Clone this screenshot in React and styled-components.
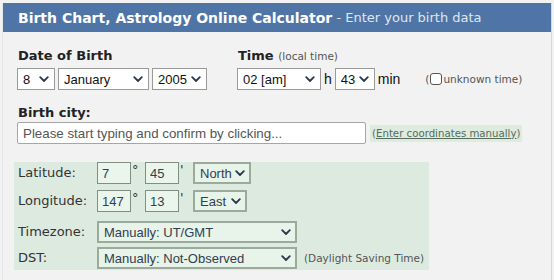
import styled, { createGlobalStyle } from 'styled-components';

const GlobalStyle = createGlobalStyle`
    html, body {
        margin: 0;
        padding: 0;
        background: #f2f2f2;
    }
    body {
        font-family: "DejaVu Sans", Verdana, sans-serif;
    }
`;

function Chevron() {
    return (
        <ArrowIcon width="10" height="7" viewBox="0 0 10 7">
            <path d="M1.2 1.2 L5 5 L8.8 1.2" fill="none" stroke="currentColor" strokeWidth="1.8" strokeLinecap="round" strokeLinejoin="round" />
        </ArrowIcon>
    );
}

function Dropdown({ width, value, options, green }) {
    return (
        <SelectWrap $width={width}>
            <Select $green={green} defaultValue={value}>
                {options.map((o) => (
                    <option key={o}>{o}</option>
                ))}
            </Select>
            <Chevron />
        </SelectWrap>
    );
}

const months = ['January', 'February', 'March', 'April', 'May', 'June', 'July', 'August', 'September', 'October', 'November', 'December'];

export default function App() {
    return (
        <>
            <GlobalStyle />
            <Panel>
                <Header>
                    Birth Chart, Astrology Online Calculator
                    <HeaderSub>&nbsp;- Enter your birth data</HeaderSub>
                </Header>
                <Body>
                    <TopRow>
                        <Group>
                            <Label>Date of Birth</Label>
                            <Controls>
                                <Dropdown width={38} value="8" options={['8']} />
                                <Dropdown width={91} value="January" options={months} />
                                <Dropdown width={55} value="2005" options={['2005']} />
                            </Controls>
                        </Group>
                        <Group>
                            <Label>
                                Time <Note>(local time)</Note>
                            </Label>
                            <Controls>
                                <Dropdown width={84} value="02 [am]" options={['02 [am]']} />
                                <Unit>h</Unit>
                                <Dropdown width={40} value="43" options={['43']} />
                                <Unit>min</Unit>
                                <Unknown>
                                    (<CheckBox type="checkbox" />unknown time)
                                </Unknown>
                            </Controls>
                        </Group>
                    </TopRow>
                    <CityLabel>Birth city:</CityLabel>
                    <CityRow>
                        <CityInput placeholder="Please start typing and confirm by clicking..." />
                        <ManualLink>
                            (<u>Enter coordinates manually</u>)
                        </ManualLink>
                    </CityRow>
                    <CoordBox>
                        <CoordRow $top={3}>
                            <RowLabel>Latitude:</RowLabel>
                            <Fields>
                                <NumInput defaultValue="7" />
                                <Mark>°</Mark>
                                <NumInput defaultValue="45" />
                                <Mark>'</Mark>
                                <Dropdown width={58} value="North" options={['North', 'South']} green />
                            </Fields>
                        </CoordRow>
                        <CoordRow $top={6}>
                            <RowLabel>Longitude:</RowLabel>
                            <Fields>
                                <NumInput defaultValue="147" />
                                <Mark>°</Mark>
                                <NumInput defaultValue="13" />
                                <Mark>'</Mark>
                                <Dropdown width={54} value="East" options={['East', 'West']} green />
                            </Fields>
                        </CoordRow>
                        <CoordRow $top={9}>
                            <RowLabel>Timezone:</RowLabel>
                            <Fields>
                                <Dropdown width={200} value="Manually: UT/GMT" options={['Manually: UT/GMT']} green />
                            </Fields>
                        </CoordRow>
                        <CoordRow $top={4}>
                            <RowLabel>DST:</RowLabel>
                            <Fields>
                                <Dropdown width={200} value="Manually: Not-Observed" options={['Manually: Not-Observed']} green />
                                <DstNote>(Daylight Saving Time)</DstNote>
                            </Fields>
                        </CoordRow>
                    </CoordBox>
                </Body>
            </Panel>
        </>
    );
}

const Panel = styled.div`
    margin: 3px 0 0 2px;
    width: 548px;
    height: 277px;
    background: #f2f2f2;
    border-left: 1px solid #e6e6e6;
    border-right: 1px solid #d8d8d8;
    overflow: hidden;
`;

const Header = styled.div`
    height: 29px;
    display: flex;
    align-items: center;
    padding-left: 15px;
    background: #4f75a7;
    color: #ffffff;
    font-size: 14px;
    font-weight: bold;
    white-space: nowrap;
`;

const HeaderSub = styled.span`
    font-size: 13px;
    font-weight: normal;
    color: #dfe7f2;
`;

const Body = styled.div`
    padding: 15px 0 0 14px;
`;

const TopRow = styled.div`
    display: flex;
    gap: 30px;
`;

const Group = styled.div`
    display: flex;
    flex-direction: column;
    gap: 3px;
`;

const Label = styled.div`
    font-size: 13px;
    font-weight: bold;
    color: #222;
    line-height: 18px;
    padding-left: 1px;
`;

const Note = styled.span`
    font-size: 10.5px;
    font-weight: normal;
    color: #555;
`;

const Controls = styled.div`
    display: flex;
    align-items: center;
    gap: 3px;
`;

const SelectWrap = styled.div`
    position: relative;
    width: ${(p) => p.$width}px;
    height: 22px;
`;

const Select = styled.select`
    appearance: none;
    width: 100%;
    height: 100%;
    margin: 0;
    padding: 0 0 0 5px;
    font-family: "Liberation Sans", Arial, sans-serif;
    font-size: 13px;
    color: ${(p) => (p.$green ? '#2f4050' : '#111')};
    background: ${(p) => (p.$green ? '#e8f3ea' : '#ffffff')};
    border: ${(p) => (p.$green ? '2px solid #9aab9c' : '1px solid #9a9a9a')};
    border-radius: 0;
    outline: none;
`;

const ArrowIcon = styled.svg`
    position: absolute;
    right: 6px;
    top: 8px;
    color: #2a3a4a;
    pointer-events: none;
`;

const Unit = styled.span`
    font-family: "Liberation Sans", Arial, sans-serif;
    font-size: 14px;
    color: #111;
`;

const Unknown = styled.span`
    margin-left: 22px;
    display: flex;
    align-items: center;
    font-size: 10.5px;
    color: #555;
`;

const CheckBox = styled.input`
    appearance: none;
    width: 12px;
    height: 12px;
    margin: 0 1px;
    border: 1px solid #555;
    border-radius: 3px;
    background: #fff;
`;

const CityLabel = styled(Label)`
    margin-top: 14px;
`;

const CityRow = styled.div`
    display: flex;
    align-items: center;
    gap: 4px;
`;

const CityInput = styled.input`
    box-sizing: border-box;
    width: 349px;
    height: 22px;
    margin: 0;
    padding: 0 5px;
    font-family: "Liberation Sans", Arial, sans-serif;
    font-size: 13.333px;
    background: #fff;
    border: 1px solid #a6a6a6;
    border-radius: 2px;
    &::placeholder {
        color: #555;
    }
`;

const ManualLink = styled.span`
    background: #ddecdf;
    padding: 3px 2px;
    font-size: 10.2px;
    color: #5c6b5f;
    u {
        color: #586a5b;
    }
`;

const CoordBox = styled.div`
    margin: 18px 0 0 -3px;
    width: 415px;
    box-sizing: border-box;
    padding: 0 0 1px 0;
    background: #ddeadf;
`;

const CoordRow = styled.div`
    display: grid;
    grid-template-columns: 83px auto;
    align-items: center;
    margin-top: ${(p) => p.$top}px;
`;

const RowLabel = styled.div`
    padding-left: 4px;
    font-size: 13px;
    color: #333;
    line-height: 18px;
`;

const Fields = styled.div`
    display: flex;
    align-items: center;
`;

const NumInput = styled.input`
    box-sizing: border-box;
    width: 34px;
    height: 22px;
    margin: 0;
    padding: 0 4px;
    font-family: "Liberation Sans", Arial, sans-serif;
    font-size: 13px;
    color: #2f4050;
    background: #eaf5ec;
    border: 1px solid #7f8f82;
    border-radius: 0;
`;

const Mark = styled.span`
    width: 13px;
    padding-left: 1px;
    align-self: flex-start;
    font-size: 13px;
    color: #333;
`;

const DstNote = styled(Note)`
    margin-left: 7px;
`;
